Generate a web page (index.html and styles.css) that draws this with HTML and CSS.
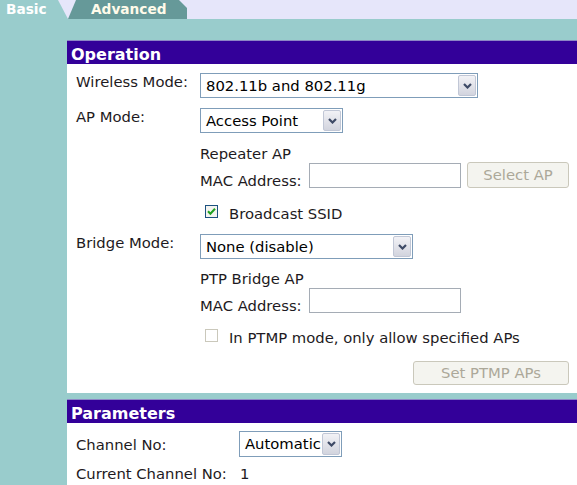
FILE: index.html
```html
<!DOCTYPE html>
<html>
<head>
<meta charset="utf-8">
<title>Basic</title>
<link rel="stylesheet" href="styles.css">
</head>
<body>
<div class="tabs">
  <div class="tab tab-basic">Basic</div>
  <div class="tab tab-adv">Advanced</div>
</div>
<div class="main">
  <section class="panel">
    <h2 class="panel-head">Operation</h2>
    <div class="panel-body op-body">
      <div class="row r1">
        <div class="label">Wireless Mode:</div>
        <div class="select sel-wmode"><span class="val">802.11b and 802.11g</span><span class="arrow"><svg width="9" height="6" viewBox="0 0 9 6"><polyline points="1,1 4.5,4.5 8,1" fill="none" stroke="#3e4a66" stroke-width="2.2"/></svg></span></div>
      </div>
      <div class="row r2">
        <div class="label">AP Mode:</div>
        <div class="select sel-ap"><span class="val">Access Point</span><span class="arrow"><svg width="9" height="6" viewBox="0 0 9 6"><polyline points="1,1 4.5,4.5 8,1" fill="none" stroke="#3e4a66" stroke-width="2.2"/></svg></span></div>
      </div>
      <div class="sub t-rep">Repeater AP</div>
      <div class="row sub mac mac1">
        <div class="mlabel">MAC Address:</div>
        <div class="input"></div>
        <div class="btn btn-sel">Select AP</div>
      </div>
      <div class="row sub chk-row ssid">
        <span class="chk"><svg width="13" height="13" viewBox="0 0 13 13"><rect x="0.5" y="0.5" width="12" height="12" fill="#f4f4f0" stroke="#1c5180"/><polyline points="3,6.3 5.4,8.8 10,3.8" fill="none" stroke="#21a121" stroke-width="2"/></svg></span>
        <span class="chk-label">Broadcast SSID</span>
      </div>
      <div class="row r3">
        <div class="label">Bridge Mode:</div>
        <div class="select sel-bridge"><span class="val">None (disable)</span><span class="arrow"><svg width="9" height="6" viewBox="0 0 9 6"><polyline points="1,1 4.5,4.5 8,1" fill="none" stroke="#3e4a66" stroke-width="2.2"/></svg></span></div>
      </div>
      <div class="sub t-ptp">PTP Bridge AP</div>
      <div class="row sub mac mac2">
        <div class="mlabel">MAC Address:</div>
        <div class="input"></div>
      </div>
      <div class="row sub chk-row ptmp">
        <span class="chk"><svg width="13" height="13" viewBox="0 0 13 13"><rect x="0.5" y="0.5" width="12" height="12" fill="#ffffff" stroke="#cac8bb"/></svg></span>
        <span class="chk-label">In PTMP mode, only allow specified APs</span>
      </div>
      <div class="row btn-row">
        <div class="btn btn-ptmp">Set PTMP APs</div>
      </div>
    </div>
  </section>
  <section class="panel params">
    <h2 class="panel-head">Parameters</h2>
    <div class="panel-body par-body">
      <div class="row ch-row">
        <div class="plabel">Channel No:</div>
        <div class="select sel-ch"><span class="val">Automatic</span><span class="arrow"><svg width="9" height="6" viewBox="0 0 9 6"><polyline points="1,1 4.5,4.5 8,1" fill="none" stroke="#3e4a66" stroke-width="2.2"/></svg></span></div>
      </div>
      <div class="row cur-row">
        <div class="plabel">Current Channel No:</div>
        <div class="cur-val">1</div>
      </div>
    </div>
  </section>
</div>
</body>
</html>
```
FILE: styles.css
```css
html, body {
  margin: 0;
  padding: 0;
}
body {
  width: 577px;
  height: 485px;
  overflow: hidden;
  background: #99cccc;
  font-family: "DejaVu Sans", Verdana, sans-serif;
  font-size: 14.8px;
  line-height: 17px;
  color: #1e1a22;
}

/* tabs */
.tabs {
  display: flex;
  height: 19px;
  background: #e6e6fa;
}
.tab {
  height: 19px;
  box-sizing: border-box;
  padding-top: 1px;
  font-size: 13.7px;
  font-weight: bold;
  line-height: 17px;
  color: #ffffff;
  white-space: nowrap;
}
.tab-basic {
  width: 68px;
  padding-left: 6px;
  background: #99cccc;
  clip-path: polygon(0 0, 58px 0, 68px 19px, 0 19px);
}
.tab-adv {
  width: 119px;
  padding-left: 23px;
  background: #669999;
  color: #fffbea;
  clip-path: polygon(0 19px, 8px 0, 111px 0, 119px 8px, 119px 19px);
}

/* main area */
.main {
  padding: 21px 0 0 67px;
}
.panel-head {
  margin: 0;
  height: 24px;
  box-sizing: border-box;
  border-top: 1px solid #8d86c6;
  background: #330099;
  color: #ffffff;
  font-size: 16px;
  font-weight: bold;
  line-height: 18px;
  padding: 5px 0 0 4px;
}
.panel-body {
  background: #ffffff;
}
.params {
  margin-top: 6px;
}

.op-body {
  padding: 9px 8px 8px 9px;
}
.row {
  display: flex;
}
.label {
  width: 124px;
  flex: none;
}
.sub {
  margin-left: 124px;
}

.r2 { margin-top: 10px; }
.t-rep { margin-top: 12px; }
.mac { align-items: flex-end; }
.mac1 { margin-top: 0; }
.mlabel {
  width: 109px;
  flex: none;
  margin-bottom: -1px;
}
.input {
  width: 152px;
  height: 25px;
  box-sizing: border-box;
  border: 1px solid #a5acb5;
  background: #ffffff;
}
.btn {
  height: 26px;
  box-sizing: border-box;
  border: 1px solid #cac8bb;
  border-radius: 3px;
  background: #f4f4ef;
  color: #aca899;
  text-align: center;
  line-height: 23px;
  white-space: nowrap;
}
.btn-sel {
  width: 102px;
  margin-left: 6px;
}
.chk-row {
  align-items: flex-start;
  margin-left: 129px;
}
.chk {
  width: 13px;
  height: 13px;
  flex: none;
  display: block;
}
.chk svg { display: block; }
.chk-label {
  margin-left: 11px;
}
.ssid { margin-top: 17px; }
.r3 { margin-top: 12px; }
.t-ptp { margin-top: 11px; }
.mac2 { margin-top: 1px; }
.ptmp { margin-top: 16px; }
.btn-row {
  margin-top: 15px;
  justify-content: flex-end;
}
.btn-ptmp {
  width: 156px;
  height: 24px;
  line-height: 22px;
}

/* select */
.select {
  display: flex;
  height: 25px;
  box-sizing: border-box;
  border: 1px solid #7f9db9;
  background: #ffffff;
  color: #000000;
}
.select .val {
  flex: 1;
  padding-left: 5px;
  line-height: 23px;
  white-space: nowrap;
  overflow: hidden;
}
.select .arrow {
  width: 18px;
  flex: none;
  margin: 1px;
  box-sizing: border-box;
  border: 1px solid #c1c7d6;
  border-radius: 2px;
  background: linear-gradient(#f2f2f6, #d2d4de);
  display: flex;
  align-items: center;
  justify-content: center;
}
.select .arrow svg { display: block; }
.sel-wmode { width: 278px; }
.sel-ap { width: 143px; }
.sel-bridge { width: 213px; }
.sel-ch { width: 103px; height: 26px; }

/* parameters */
.par-body {
  padding: 8px 8px 10px 9px;
}
.ch-row {
  align-items: center;
}
.plabel {
  width: 163px;
  flex: none;
}
.cur-row {
  margin-top: 8px;
}
.cur-val {
  padding-left: 1px;
}
```
